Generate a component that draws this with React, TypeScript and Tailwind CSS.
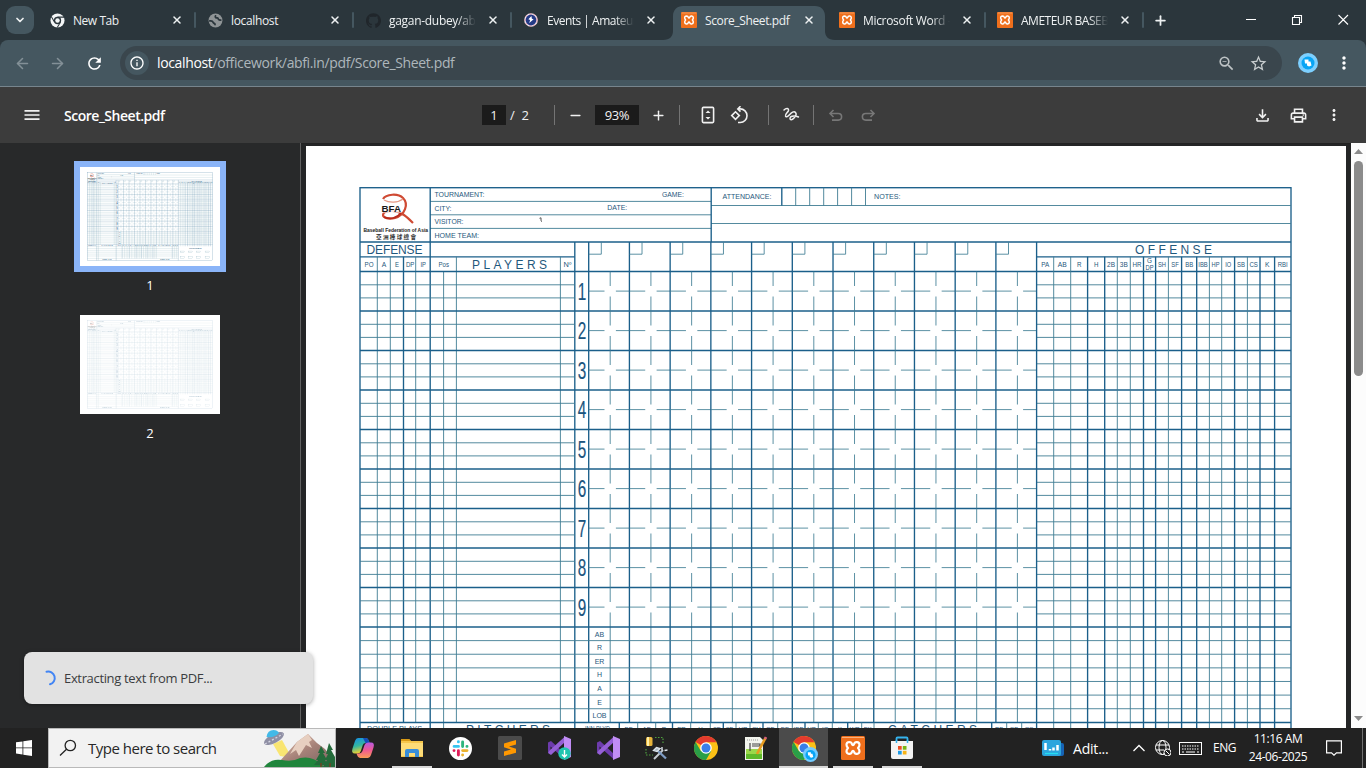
import React from "react";
import { ChevronDown, X, Plus, ArrowLeft, ArrowRight, Minus } from "lucide-react";
import { MdRefresh, MdOutlineInfo, MdOutlineFileDownload, MdMoreVert, MdStarBorder, MdZoomOut, MdMenu, MdOutlinePrint } from "react-icons/md";
import { SiGithub } from "react-icons/si";

const BLUE = "#1b5f8a";
const THIN = "#3f7d93";

const defenseCols = [377.3, 390.3, 403.5, 415.7];
const offenseCols = [1036.6, 1053.7, 1070.7, 1087.6, 1104.7, 1117.3, 1130.3, 1143.5, 1155.6, 1168.4, 1181.6, 1196.7, 1209.4, 1221.7, 1234.6, 1247.4, 1260, 1274.6, 1291];
const offenseLabels = ["PA", "AB", "R", "H", "2B", "3B", "HR", "", "SH", "SF", "BB", "IBB", "HP", "IO", "SB", "CS", "K", "RBI"];
const boldOffense = [0, 3, 4, 7, 8, 10, 11, 14, 16, 17];
const rowY = (i: number) => 271.5 + i * 39.5;
const colX = (i: number) => 588.7 + i * 40.72;
const totalY = (i: number) => 627 + i * 13.62;

type LineProps = { x1: number; y1: number; x2: number; y2: number; thin?: boolean };
function L({ x1, y1, x2, y2, thin }: LineProps) {
  return <line x1={x1} y1={y1} x2={x2} y2={y2} stroke={thin ? THIN : BLUE} strokeWidth={thin ? 0.9 : 1.35} />;
}

type LabelProps = { x: number; y: number; s?: number; w?: number; mid?: boolean; children: string };
function Label({ x, y, s = 7, w, mid, children }: LabelProps) {
  return (
    <text x={mid && w ? x - w / 2 : x} y={y} fontSize={s} textLength={w} lengthAdjust={s > 10 ? "spacing" : "spacingAndGlyphs"} textAnchor={mid && !w ? "middle" : "start"} fill="#1f587c">
      {children}
    </text>
  );
}

function BfaLogo() {
  return (
    <g>
      <path d="M383 199c3-5 15-6 20-1 6 6 2 17-8 20-6 1.500-12 0-12-3s5-4 9-4c9 0 15 6 21 12" fill="none" stroke="#cf4a33" strokeWidth="2.200" />
      <path d="M384 200c5 3 14 3 19-1" fill="none" stroke="#e59a86" strokeWidth="1.300" />
      <path d="M384 217c6 3 13 1 17-4" fill="none" stroke="#b92a1c" strokeWidth="1.800" />
      <rect x="381" y="204.700" width="20.500" height="7.900" fill="#fff" opacity=".85" />
      <text x="381.500" y="212.300" fontSize="9.500" fontWeight="700" textLength="19.500" lengthAdjust="spacingAndGlyphs" fill="#181818">BFA</text>
      <text x="363.500" y="232" fontSize="6" fontWeight="700" textLength="64.500" lengthAdjust="spacingAndGlyphs" fill="#222">Baseball Federation of Asia</text>
      <text x="376" y="239.200" fontSize="5.600" fontWeight="700" textLength="40" fill="#333">亞洲棒球總會</text>
    </g>
  );
}

function Sheet({ className, viewBox, label }: { className: string; viewBox: string; label: string }) {
  const nine = Array.from({ length: 9 }, (_, i) => i);
  const eleven = Array.from({ length: 11 }, (_, i) => i);
  return (
    <svg className={className} viewBox={viewBox} aria-label={label} fontFamily='"Liberation Sans", "Noto Sans CJK TC", sans-serif'>
      <BfaLogo />
      <rect x="360" y="187.7" width="931" height="652" fill="none" stroke={BLUE} strokeWidth="1.35" />
      {[201.4, 214.8, 228.4].map((y) => <L key={y} x1={430} x2={711} y1={y} y2={y} thin />)}
      {[205.5, 223.5].map((y) => <L key={y} x1={711} x2={1291} y1={y} y2={y} thin />)}
      <L x1={360} x2={1291} y1={242} y2={242} />
      <L x1={430.2} x2={430.2} y1={187.7} y2={840} />
      <L x1={711.2} x2={711.2} y1={187.7} y2={242} />
      <L x1={781.8} x2={781.8} y1={187.7} y2={205.5} />
      {[795.7, 809.7, 823.7, 837.6, 851.6, 865.5].map((x) => <L key={x} x1={x} x2={x} y1={187.7} y2={205.5} thin />)}
      <L x1={360} x2={574.7} y1={256.8} y2={256.8} />
      <L x1={1036.6} x2={1291} y1={256.8} y2={256.8} />
      <Label x={434.5} y={197} w={50}>TOURNAMENT:</Label>
      <Label x={434.5} y={210.6} w={17}>CITY:</Label>
      <Label x={434.5} y={224.3} w={29}>VISITOR:</Label>
      <Label x={434.5} y={238} w={44.5}>HOME TEAM:</Label>
      <Label x={662} y={196.5} w={22}>GAME:</Label>
      <Label x={607.3} y={210.1} w={20}>DATE:</Label>
      <Label x={722.5} y={198.8} w={49}>ATTENDANCE:</Label>
      <Label x={874} y={198.8} w={26.5}>NOTES:</Label>
      <path d="M539.500 218.300l1.500-.5v3l1 .8" stroke="#555" fill="none" strokeWidth="1" />
      <Label x={366.5} y={254} s={12} w={56}>DEFENSE</Label>
      <Label x={472} y={269} s={12} w={75}>PLAYERS</Label>
      <Label x={1135} y={254} s={12} w={77}>OFFENSE</Label>
      {["PO", "A", "E", "DP", "IP"].map((t, i) => <Label key={t} x={[369, 384, 397, 410.2, 423.2][i]} y={267.2} s={6.8} w={[9, 4.5, 4, 8.5, 5.5][i]} mid>{t}</Label>)}
      <Label x={438.5} y={267.2} s={6.8} w={10.5}>Pos</Label>
      <Label x={563.5} y={267.2} s={6.8} w={8}>Nº</Label>
      {defenseCols.map((x, i) => <L key={x} x1={x} x2={x} y1={256.8} y2={722.5} thin={i !== 2} />)}
      <L x1={443.6} x2={443.6} y1={271.5} y2={840} thin />
      <L x1={456.4} x2={456.4} y1={256.8} y2={722.5} thin />
      <L x1={560.4} x2={560.4} y1={256.8} y2={722.5} thin />
      <L x1={574.8} x2={574.8} y1={242} y2={840} />
      {nine.map((i) => (
        <g key={i}>
          <L x1={360} x2={1291} y1={rowY(i)} y2={rowY(i)} />
          {[13.3, 26.4].map((d) => (
            <g key={d}>
              <L x1={360} x2={574.8} y1={rowY(i) + d} y2={rowY(i) + d} thin />
              <L x1={1036.6} x2={1291} y1={rowY(i) + d} y2={rowY(i) + d} thin />
            </g>
          ))}
          <text x="577.800" y={rowY(i) + 28.2} fontSize="23.500" textLength="8.500" lengthAdjust="spacingAndGlyphs" fill="#1b557f" stroke="#1b557f" strokeWidth=".2">{i + 1}</text>
        </g>
      ))}
      {eleven.map((c) => (
        <g key={c}>
          <L x1={colX(c)} x2={colX(c)} y1={242} y2={722.5} />
          <path d={`M${colX(c)} 254.200h12.600v-12`} fill="none" stroke={THIN} strokeWidth=".85" />
          <L x1={colX(c) + 21.5} x2={colX(c) + 21.5} y1={627} y2={722.5} thin />
          {nine.map((r) => (
            <path key={r} d={`M${colX(c) + 21.5} ${rowY(r)}v14.500m0 10.500v14.500M${colX(c)} ${rowY(r) + 19.6}h15.800m11.400 0h13.500`} fill="none" stroke={THIN} strokeWidth=".85" />
          ))}
        </g>
      ))}
      {["AB", "R", "ER", "H", "A", "E", "LOB"].map((t, i) => (
        <g key={t}>
          <L x1={360} x2={1291} y1={totalY(i)} y2={totalY(i)} thin={i > 0} />
          <Label x={599.5} y={totalY(i) + 9.5} s={7} mid>{t}</Label>
        </g>
      ))}
      {offenseCols.slice(0, 18).map((x, i) => (
        <g key={x}>
          <L x1={x} x2={x} y1={i === 0 ? 242 : 256.8} y2={i === 0 ? 840 : 735} thin={!boldOffense.includes(i)} />
          {offenseLabels[i] && <Label x={(x + offenseCols[i + 1]) / 2} y={267} s={6.8} w={[8, 9, 4.5, 4.5, 8, 8, 9, 0, 8, 7.5, 8, 9.5, 8, 6, 8, 8.5, 4.5, 10][i]} mid>{offenseLabels[i]}</Label>}
        </g>
      ))}
      <Label x={1149.6} y={263.3} s={6.4} mid>G</Label>
      <Label x={1149.6} y={269.8} s={6.4} w={8} mid>DP</Label>
      <L x1={360} x2={1291} y1={722.5} y2={722.5} />
      <Label x={367} y={731.2} s={6.4} w={55}>DOUBLE PLAYS</Label>
      <Label x={466} y={734.3} s={12} w={84}>PITCHERS</Label>
      <Label x={585} y={731.2} s={6.4} w={25}>INN.PLYD</Label>
      <Label x={888} y={734.3} s={12} w={89}>CATCHERS</Label>
      {[619.3, 637.7, 655.7, 672.5, 690.7, 710.3, 723.3, 736, 750, 763, 777.7, 792.3, 805, 818.3, 832.3, 847.7, 861.7, 874, 991.7, 1006.7, 1021.7].map((x, i) => (
        <L key={x} x1={x} x2={x} y1={722.5} y2={825} thin={i % 3 !== 0} />
      ))}
      {["BF", "AB", "R", "ER", "H", "2B", "3B", "HR", "SH", "SF", "BB", "IBB", "HP", "IO", "K", "WP", "BK", "PB", "SB", "CS"].map((t, i) => (
        <Label key={t} x={[628.5, 646.7, 664, 681.5, 700.5, 717, 729.6, 743, 756.5, 770.3, 785, 798.6, 811.6, 825.3, 840, 854.7, 867.8, 999.2, 1014.2, 1029][i]} y={731.2} s={6.2} mid>{t}</Label>
      ))}
      {[737, 751, 765, 779, 793, 807, 825].map((y) => <L key={y} x1={360} x2={1036.6} y1={y} y2={y} thin />)}
      <Label x={471} y={836} s={10} w={70}>TOTALS</Label>
      <Label x={900} y={836} s={10} w={70}>TOTALS</Label>
      <Label x={1115} y={752} s={10} w={94}>UMPIRES</Label>
      {[770, 810].map((y) => [1055, 1110, 1170, 1235].map((x) => <rect key={`${x}-${y}`} x={x} y={y} width="30" height="14" fill="none" stroke={THIN} />))}
    </svg>
  );
}

function XamppIcon({ className }: { className: string }) {
  return (
    <svg className={className} viewBox="0 0 24 24">
      <rect width="24" height="24" rx="1.500" fill="#ef6f1c" />
      <path d="M1 1.500h22" stroke="#f8b17d" strokeWidth="1" />
      <path d="M8.300 6A2.800 2.800 0 0 0 5.500 8.800c0 1.600.6 2.300 1.500 3.200-.9.900-1.500 1.600-1.500 3.200a2.800 2.800 0 0 0 5.500.6q.3-.9 1-.9t1 .9a2.800 2.800 0 0 0 5.500-.6c0-1.600-.6-2.300-1.500-3.200.9-.9 1.500-1.600 1.500-3.200a2.800 2.800 0 0 0-5.500-.6q-.3.900-1 .9t-1-.9A2.800 2.800 0 0 0 8.300 6z" fill="none" stroke="#fff" strokeWidth="2.200" strokeLinejoin="round" />
    </svg>
  );
}

function ChromeMono() {
  return (
    <svg className="size-[15px]" viewBox="0 0 16 16">
      <circle cx="8" cy="8" r="7.500" fill="#f4f6f7" />
      <circle cx="8" cy="8" r="3.900" fill="#2b363c" />
      <circle cx="8" cy="8" r="2.400" fill="#f4f6f7" />
      <path d="M8 4.400h7M4.900 9.800L1.500 4M11.100 9.800L7.700 15.500" stroke="#2b363c" strokeWidth="1.100" />
    </svg>
  );
}

function GlobeGrey() {
  return (
    <svg className="size-[15px]" viewBox="0 0 16 16">
      <circle cx="8" cy="8" r="7.400" fill="#8f9496" />
      <path d="M2 8.500c1.500-.3 3 .3 3.500 1.500.4 1.200 2 1 2 2.300M8 3c-.8 1.800.5 2.300 2 2.300 1 0 .8 1.800 2 2 .8.200 1.300.2 1.600.2" fill="none" stroke="#2b363c" strokeWidth="1.900" strokeLinecap="round" />
    </svg>
  );
}

function EventsIcon() {
  return (
    <svg className="size-[14px]" viewBox="0 0 16 16">
      <circle cx="8" cy="8" r="7" fill="#243a86" stroke="#f1e9f1" strokeWidth="1.700" />
      <circle cx="8" cy="8" r="7" fill="none" stroke="#d66277" strokeWidth=".7" strokeDasharray="3 2" />
      <path d="M8.500 3.500L5 7l2 1-1 3.500 5-4.500-2-.5z" fill="#fff" />
    </svg>
  );
}

const tabs = [
  { title: "New Tab", icon: <ChromeMono />, active: false, cls: "tracking-[-0.45px]" },
  { title: "localhost", icon: <GlobeGrey />, active: false, cls: "tracking-[-0.35px]" },
  { title: "gagan-dubey/ab", icon: <SiGithub className="size-[15px] text-[#20262b]" />, active: false, cls: "tracking-[-0.3px]" },
  { title: "Events | Amateur", icon: <EventsIcon />, active: false, cls: "tracking-[-0.5px]" },
  { title: "Score_Sheet.pdf", icon: <XamppIcon className="size-4" />, active: true, cls: "tracking-[-0.37px]" },
  { title: "Microsoft Word -", icon: <XamppIcon className="size-4" />, active: false, cls: "tracking-[-0.32px]" },
  { title: "AMETEUR BASEB", icon: <XamppIcon className="size-4" />, active: false, cls: "tracking-[-0.5px]" },
];

function TabStrip() {
  return (
    <div className="flex h-10 shrink-0 items-center bg-[#2b363c] text-[#eef1f2]">
      <div className="ml-[6px] flex size-7 items-center justify-center rounded-[9px] bg-[#455760]">
        <ChevronDown className="size-3" strokeWidth={3.5} />
      </div>
      <div className="ml-[5px] flex h-full">
        {tabs.map((t, i) => (
          <div key={t.title} className="relative flex h-full w-[158px] items-center">
            {t.active && (
              <svg className="absolute -left-[8px] top-[6px] h-[34px] w-[172px]" viewBox="0 0 172 34">
                <path d="M0 34c7 0 10-4 10-9V10C10 4 14 0 20 0h132c6 0 10 4 10 10v15c0 5 3 9 10 9z" fill="#455760" />
              </svg>
            )}
            <div className="relative ml-[10px] flex size-4 items-center justify-center">{t.icon}</div>
            <div className={`relative ml-2 w-[87px] overflow-hidden whitespace-nowrap pt-px text-[12px] leading-4 ${t.cls} ${i === 2 || i === 3 || i > 4 ? "[mask-image:linear-gradient(to_right,black_78%,transparent)]" : ""}`}>{t.title}</div>
            <X className="relative ml-[11px] size-[12px]" strokeWidth={3} />
            {i !== 3 && i !== 4 && <div className="absolute right-px top-3 h-4 w-[2px] rounded bg-[#455760]" />}
          </div>
        ))}
      </div>
      <Plus className="ml-[8px] size-[15px]" strokeWidth={2.800} />
      <svg className="ml-auto h-3 w-[104px]" viewBox="0 0 104 12" fill="none" stroke="#fff" strokeWidth="1.100">
        <path d="M0 5.500h10M46.500 3.500h7v7h-7zM48.500 3.500v-2h7v7h-2M92.500 1l9.500 9.500M102 1l-9.500 9.500" />
      </svg>
      <div className="w-[16px]" />
    </div>
  );
}

function AddressBar() {
  return (
    <div className="flex h-[47px] shrink-0 bg-[#2b363c]">
      <div className="flex w-full items-center rounded-t-[8px] border-b border-[#77858d] bg-[#455760] text-white">
        <ArrowLeft className="ml-[14px] size-[17px] text-[#839097]" strokeWidth={2.200} />
        <ArrowRight className="ml-[18px] size-[17px] text-[#839097]" strokeWidth={2.200} />
        <MdRefresh className="ml-[19px] size-[19px]" />
        <div className="ml-[16px] flex h-[34px] w-[1162px] items-center rounded-full bg-[#3a464d]">
          <div className="ml-[5px] flex size-6 items-center justify-center rounded-full bg-[#455760]"><MdOutlineInfo className="size-4" /></div>
          <div className="ml-2 whitespace-nowrap text-[14px] leading-5 tracking-[-0.36px] text-[#aeb7bc]"><span className="text-white">localhost</span>/officework/abfi.in/pdf/Score_Sheet.pdf</div>
          <MdZoomOut className="ml-auto size-[19px] text-[#bec3c5]" />
          <MdStarBorder className="ml-[13px] mr-[14px] size-[19px] text-[#c8cdcf]" />
        </div>
        <div className="ml-4 flex size-5 items-center justify-center rounded-full bg-[#7dd0ff]"><SyncMark /></div>
        <MdMoreVert className="ml-[16px] size-5" />
      </div>
    </div>
  );
}

function SyncMark() {
  return (
    <svg className="size-3.5" viewBox="0 0 14 14">
      <circle cx="7" cy="7" r="6.500" fill="#08a5f5" />
      <path d="M3.500 3.500h4v2h2l1 4-2.500 1-2-1v-2h-2z" fill="#fff" />
    </svg>
  );
}

function PdfToolbar() {
  return (
    <div className="flex h-14 shrink-0 items-center bg-[#3c3c3c] text-[#f1f1f1]">
      <MdMenu className="ml-[22px] size-5" />
      <div className="ml-[22px] w-[418px] whitespace-nowrap pt-px text-[14px] font-semibold tracking-[-0.48px] text-white">Score_Sheet.pdf</div>
      <div className="flex h-5 w-6 items-center justify-center bg-[#1b1b1b] pt-px text-[13px]">1</div>
      <div className="ml-[4px] w-[44px] pt-px text-[13px]">/&nbsp; 2</div>
      <div className="h-5 w-px bg-[#747474]" />
      <Minus className="ml-[13px] size-[15px]" strokeWidth={2.300} />
      <div className="ml-[12px] flex h-5 w-11 items-center justify-center bg-[#1b1b1b] pt-px text-[13px] tracking-[-0.4px]">93%</div>
      <Plus className="ml-[12px] size-[15px]" strokeWidth={2.300} />
      <div className="ml-[13px] h-5 w-px bg-[#747474]" />
      <svg className="ml-[19px] size-[18px]" viewBox="0 0 18 18" fill="none" stroke="currentColor" strokeWidth="1.600"><rect x="3.400" y="1.400" width="11.200" height="15.200" rx="1" /><path d="M6.500 6.900L9 4.400l2.500 2.500zM6.500 11.100L9 13.600l2.500-2.500z" fill="currentColor" stroke="none" /></svg>
      <svg className="ml-[13px] size-[18px]" viewBox="0 0 18 18" fill="none" stroke="currentColor" strokeWidth="1.600"><path d="M5.500 5.800l3.800 3.800-3.800 3.800-3.800-3.800zM8 2.900h2.200a6.800 6.800 0 0 1 0 13.600H8" /><path d="M10.500.2L7.800 2.900l2.700 2.700" /></svg>
      <div className="ml-[20px] h-5 w-px bg-[#747474]" />
      <svg className="ml-[13px] size-[18px]" viewBox="0 0 18 18" fill="none" stroke="currentColor" strokeWidth="1.500" strokeLinecap="round"><path d="M2 4c2-2 5-2 4.500.5C6 6.500 3 8 3.500 10c.6 1.700 2.500.5 4-1.200 2-2.300 4.500-4 6-2.300s0 4-1.700 5.700-3.800 2-3.800.4 2-2.600 4-2.600c1.600 0 3 .3 4.500 1" /></svg>
      <div className="ml-[13px] h-5 w-px bg-[#747474]" />
      <svg className="ml-[14px] size-4 text-[#777]" viewBox="0 0 16 16" fill="none" stroke="currentColor" strokeWidth="1.600"><path d="M5.500 3L2 6.500 5.500 10M2.500 6.500h7.800a3.300 3.300 0 0 1 0 6.600H4" /></svg>
      <svg className="ml-[16px] size-4 text-[#777]" viewBox="0 0 16 16" fill="none" stroke="currentColor" strokeWidth="1.600"><path d="M10.500 3L14 6.500 10.500 10M13.500 6.500H5.700a3.300 3.300 0 0 0 0 6.600H12" /></svg>
      <MdOutlineFileDownload className="ml-auto size-[19px]" />
      <MdOutlinePrint className="ml-[17px] size-[19px]" />
      <MdMoreVert className="ml-[17px] mr-[23px] size-[18px]" />
    </div>
  );
}

function Viewer() {
  return (
    <div className="relative flex h-[585px] shrink-0 bg-[#28292a]">
      <div className="flex w-[301px] flex-col items-center border-r border-[#606060] pt-[18px] text-[13px] leading-4 text-white">
        <div className="h-[111px] w-[152px] border-[6px] border-[#8ab4f8] bg-white"><Sheet className="h-[99px] w-[140px]" viewBox="306 146 1040 735" label="Page 1 thumbnail" /></div>
        <div className="mt-[5px]">1</div>
        <div className="mt-[22px] h-[99px] w-[140px] bg-white"><Sheet className="size-full opacity-40" viewBox="306 146 1040 735" label="Page 2 thumbnail" /></div>
        <div className="mt-[11px]">2</div>
      </div>
      <div className="flex flex-1 border-t border-[#222] bg-[#242526] pl-[5px] pt-[2px]">
        <div className="h-[582px] w-[1040px] overflow-hidden bg-white"><Sheet className="h-[582px] w-[1040px]" viewBox="306 146 1040 582" label="Score sheet" /></div>
      </div>
      <div className="flex w-[15px] flex-col items-center bg-[#fcfcfc] pt-[6px]">
        <svg className="h-[5px] w-[9px]" viewBox="0 0 9 5"><path d="M0 5L4.500 0 9 5z" fill="#8b8b8b" /></svg>
        <div className="mt-[7px] h-[215px] w-[9px] rounded-full bg-[#8b8b8b]" />
        <svg className="mb-[7px] mt-auto h-[5px] w-[9px]" viewBox="0 0 9 5"><path d="M0 0l4.500 5L9 0z" fill="#8b8b8b" /></svg>
      </div>
      <div className="absolute left-6 top-[509px] flex h-[52px] w-[289px] items-center rounded-lg bg-[#e2e2e2] text-[#3b3d40] shadow-[0_1px_4px_rgba(0,0,0,0.35)]">
        <svg className="ml-[18px] size-4" viewBox="0 0 16 16"><path d="M4.500 1.800A6.300 6.300 0 0 1 8 14.300" fill="none" stroke="#4285f4" strokeWidth="2" strokeLinecap="round" /></svg>
        <div className="ml-[6px] whitespace-nowrap pt-[2px] text-[13px] tracking-[-0.34px]">Extracting text from PDF...</div>
      </div>
    </div>
  );
}

function ChromeIcon() {
  return (
    <svg className="size-6" viewBox="0 0 24 24">
      <circle cx="12" cy="12" r="12" fill="#fbc116" />
      <path d="M12 12L1.600 6A12 12 0 0 1 22.400 6.200H12z" fill="#e33b2e" />
      <path d="M1.600 6A12 12 0 0 0 12 24l5.200-9L12 12 6.800 15z" fill="#2a9f48" />
      <circle cx="12" cy="12" r="5.800" fill="#fff" />
      <circle cx="12" cy="12" r="4.500" fill="#397ee8" />
    </svg>
  );
}

function VsIcon({ download }: { download?: boolean }) {
  return (
    <svg className="size-6" viewBox="0 0 24 24">
      <path d="M1 6.500l3-1.500 14 13v5.500L3.500 10.500v5L1 17z" fill="#6d3bad" />
      <path d="M1 17l3 2L18 6V.5L3 14z" fill="#9560d6" />
      <path d="M17 0l7 3v18l-7 3z" fill="#c18df5" />
      {download && <g><circle cx="17.500" cy="17.500" r="6.200" fill="#20c5b0" /><path d="M17.500 14v7M15 18.500l2.500 2.500 2.500-2.500" fill="none" stroke="#fff" strokeWidth="1.400" /></g>}
    </svg>
  );
}

function Copilot() {
  return (
    <svg className="size-6" viewBox="0 0 24 24">
      <defs>
        <linearGradient id="cpA" x2="0.3" y2="1"><stop stopColor="#148de8" /><stop offset=".55" stopColor="#34b7a0" /><stop offset="1" stopColor="#f3d22d" /></linearGradient>
        <linearGradient id="cpB" x2="0" y2="1"><stop stopColor="#b659e0" /><stop offset=".5" stopColor="#f05a91" /><stop offset="1" stopColor="#f89b55" /></linearGradient>
      </defs>
      <path d="M7 2h8q2 0 3 3l.5 2h-4q-2 0-2.700 2l-2 6q-.8 2.500-3.300 2.500H4q-4 0-2.500-5L4 5q1-3 3-3z" fill="url(#cpA)" />
      <path d="M12 2h3q2 0 3 3l.5 2h-4z" fill="#164cb9" />
      <path d="M17 22H9q-2 0-3-3l-.4-1.500h2q3 0 3.900-2.500l2-6q.8-2.500 3.500-2.500h3q4 0 2.500 5L20 19q-1 3-3 3z" fill="url(#cpB)" />
    </svg>
  );
}

const taskIcons: { name: string; node: React.ReactNode; bar?: boolean; active?: boolean }[] = [
  { name: "copilot", node: <Copilot /> },
  { name: "files", bar: true, node: <svg className="h-6 w-[22px]" viewBox="0 0 22 24"><path d="M0 3h8l2 2h12v16H0z" fill="#f5c64b" /><path d="M0 3h8l2 2H0z" fill="#d99a15" /><path d="M0 7h22v13H0z" fill="#fddc77" /><path d="M4 21v-6q0-2 2-2h10q2 0 2 2v6h-4v-4H8v4z" fill="#398ed8" /></svg> },
  { name: "slack", node: <svg className="size-[23px]" viewBox="0 0 24 24"><circle cx="12" cy="12" r="12" fill="#fff" /><g strokeWidth="3" strokeLinecap="round"><path d="M9.800 5v.1M5.300 9.800h4.600" stroke="#36c5f0" /><path d="M14.200 5.200v4.700M18.700 9.800h.1" stroke="#2eb67d" /><path d="M14.200 14.200h4.600M14.200 18.700v.1" stroke="#ecb22e" /><path d="M9.800 14.200v4.600M5.200 14.200h.1" stroke="#e01e5a" /></g></svg> },
  { name: "sublime", node: <svg className="size-6" viewBox="0 0 24 24"><rect width="24" height="24" rx="1.500" fill="#4b4b4b" /><path d="M6 7.500l12-3.500v4.500l-7 2 7 2.200v4L6 20v-4.500l7-2-7-2.200z" fill="#ff9800" /></svg> },
  { name: "installer", node: <VsIcon download /> },
  { name: "vs", node: <VsIcon /> },
  { name: "ssms", node: <svg className="size-6" viewBox="0 0 24 24"><rect x="1" y="1" width="6.500" height="9" rx="1.500" fill="#e6b43c" /><rect x="2" y="1" width="2" height="9" fill="#fff0a7" /><path d="M10 1.500h8v7M1 13v6h7" fill="none" stroke="#4fa03f" strokeWidth="1.200" strokeDasharray="1.500 1.500" /><path d="M9 23l9-9" stroke="#c6ccd3" strokeWidth="2" /><path d="M12 14l9 8.500" stroke="#7f9dc5" strokeWidth="2.300" /><path d="M8.500 14.500l3-3 3.500 1-3 3zM17 14v-3M19.500 14.500l3-.5" stroke="#dce4eb" strokeWidth="1.400" fill="#a6b4c1" /></svg> },
  { name: "chrome", node: <ChromeIcon /> },
  { name: "notepad", node: <svg className="size-6" viewBox="0 0 24 24"><path d="M2 1h15l3 3v20H2z" fill="#f2f4ed" /><path d="M3 13h16v10H3z" fill="#9bd84a" /><path d="M3 18h16v5H3z" fill="#5fb92a" /><path d="M4 4h11" stroke="#999" strokeDasharray="1 1" /><path d="M7 7v8M9 8h8v2H9" stroke="#444" strokeWidth="1.200" fill="none" /><path d="M22.500 2L14 18" stroke="#e79b1f" strokeWidth="2.600" /><path d="M23 1l-1 2" stroke="#d6607a" strokeWidth="2.600" /></svg> },
  { name: "chrome-profile", bar: true, active: true, node: <div className="relative"><ChromeIcon /><div className="absolute -bottom-[2px] -right-[2px] flex size-[15px] items-center justify-center rounded-full bg-[#74ccff]"><div className="flex size-[11px] items-center"><SyncMark /></div></div></div> },
  { name: "xampp", bar: true, node: <XamppIcon className="size-6" /> },
  { name: "store", bar: true, node: <svg className="size-6" viewBox="0 0 24 24"><path d="M6.500 7V2.500q0-1 1-1h9q1 0 1 1V7" fill="none" stroke="#35b3ed" strokeWidth="1.800" /><path d="M1 5h22v16q0 2-2 2H3q-2 0-2-2z" fill="#f4f4f4" /><path d="M6.500 7V4M17.500 7V4" stroke="#35b3ed" strokeWidth="1.500" /><path d="M8 10h3.700v3.700H8z" fill="#ef4d24" /><path d="M12.800 10h3.700v3.700h-3.700z" fill="#78b715" /><path d="M8 14.800h3.700v3.700H8z" fill="#1c9be8" /><path d="M12.800 14.800h3.700v3.700h-3.700z" fill="#f7b315" /></svg> },
];

function SearchArt() {
  return (
    <svg className="ml-auto h-[38px] w-[72px]" viewBox="0 0 72 38">
      <defs><linearGradient id="mtn" x2="1" y2="1"><stop stopColor="#e6c3af" /><stop offset=".5" stopColor="#a58178" /><stop offset="1" stopColor="#74615f" /></linearGradient></defs>
      <path d="M10 15l9-4 10 18-12-2z" fill="#fae35c" opacity=".85" />
      <path d="M16 33L34 13l11-8 9 9 8 6 10 13v5H14z" fill="url(#mtn)" />
      <path d="M34 13l11-8 4 6-3 2 3 6-6-3-7 11-3-6-6 4z" fill="#e7cfc0" />
      <ellipse cx="11" cy="9.500" rx="11" ry="4.500" transform="rotate(-28 11 9.500)" fill="#8f8fa4" />
      <path d="M3.500 8q1-7 7-7 4 0 5.500 3-4 5-12.500 4z" fill="#43b9e8" />
      <path d="M2 15l18-10" stroke="#d5d5e2" strokeWidth="1.300" strokeDasharray="2 2" />
      <path d="M1 38q7-9 18-7t18-2q14-3 24 9z" fill="#20853c" />
      <path d="M58 17l4 7h-2l4 7h-2l3 5H51l4-5h-2l4-7h-2zM66 14l4 7h-2l4 7v10H60l4-7h-2l3-6h-2z" fill="#246b3b" />
      <path d="M58 34v4M67 34v4" stroke="#704225" strokeWidth="1.500" />
    </svg>
  );
}

function Taskbar() {
  return (
    <div className="flex h-10 shrink-0 items-center bg-[#222] text-white">
      <svg className="ml-4 size-4" viewBox="0 0 16 16" fill="#fff"><path d="M0 2.300L6.500 1.400v6.100H0zM7.300 1.300L16 0v7.500H7.300zM0 8.300h6.500v6.200L0 13.600zM7.300 8.300H16V16l-8.700-1.300z" /></svg>
      <div className="ml-4 flex h-10 w-72 items-center border border-[#b9b9b9] bg-[#f2f2f2] text-[#282828]">
        <svg className="ml-[10px] size-[18px]" viewBox="0 0 18 18" fill="none" stroke="#222" strokeWidth="1.300"><circle cx="11.300" cy="6.500" r="5.200" /><path d="M7.500 10.300L1 16.500" /></svg>
        <div className="ml-[11px] whitespace-nowrap text-[15px] tracking-[-0.5px]">Type here to search</div>
        <SearchArt />
      </div>
      <div className="ml-[2px] flex h-full">
        {taskIcons.map((t) => (
          <div key={t.name} className={`flex h-full w-[49px] flex-col items-center ${t.active ? "bg-[#4b4b4b]" : ""}`}>
            <div className="flex h-[38px] items-center pt-[2px]">{t.node}</div>
            {t.bar && <div className={`h-[2px] bg-[#d8d8d8] ${t.active ? "w-full" : "w-10"}`} />}
          </div>
        ))}
      </div>
      <svg className="ml-auto h-4 w-[22px]" viewBox="0 0 22 16"><rect x="4" y="3" width="18" height="13" rx="2" fill="#1664b5" /><rect width="19" height="16" rx="2" fill="#2ba5dd" /><path d="M3.500 3v7M8 9v1.500M11.500 7.500v3M15.500 5v5.500" stroke="#fff" strokeWidth="2.500" /><path d="M3 13.500h13" stroke="#25dff0" strokeWidth="1.300" /></svg>
      <div className="ml-[9px] w-[60px] whitespace-nowrap text-[14px] tracking-[-0.2px]">Adit...</div>
      <svg className="h-2 w-3" viewBox="0 0 12 8" fill="none" stroke="#fff" strokeWidth="1.300"><path d="M.5 7L6 1.500 11.500 7" /></svg>
      <svg className="ml-[10px] size-4" viewBox="0 0 16 16" fill="none" stroke="#fff" strokeWidth="1"><circle cx="7.500" cy="7.500" r="7" /><ellipse cx="7.500" cy="7.500" rx="3.500" ry="7" /><path d="M1 5h13M1 10h8" /><circle cx="12.500" cy="12.500" r="3.500" fill="#222" /><path d="M10.500 10.500l4 4" /></svg>
      <svg className="ml-2 h-[13px] w-[23px]" viewBox="0 0 23 13" fill="none" stroke="#fff"><rect x=".5" y=".5" width="22" height="12" /><path d="M3 4h17M3 7h17" strokeDasharray="1.500 1" /><path d="M3 10h2M7 10h9M18 10h2" /></svg>
      <div className="ml-[11px] w-[25px] text-[12px] tracking-[-0.5px]">ENG</div>
      <div className="ml-[8px] w-[64px] whitespace-nowrap text-center text-[12px] leading-[18px] tracking-[-0.42px]"><div>11:16 AM</div><div>24-06-2025</div></div>
      <svg className="ml-[16px] size-4" viewBox="0 0 16 16" fill="none" stroke="#fff" strokeWidth="1.200"><path d="M.6.800h14.800v12h-4.900L8 15.200l-2.500-2.400H.6z" /></svg>
      <div className="ml-5 h-full w-px bg-[#707070]" />
      <div className="w-[3px]" />
    </div>
  );
}

export default function App() {
  return (
    <div className="flex h-[768px] w-[1366px] flex-col overflow-hidden font-['Open_Sans','Noto_Sans',sans-serif]">
      <TabStrip />
      <AddressBar />
      <PdfToolbar />
      <Viewer />
      <Taskbar />
    </div>
  );
}
